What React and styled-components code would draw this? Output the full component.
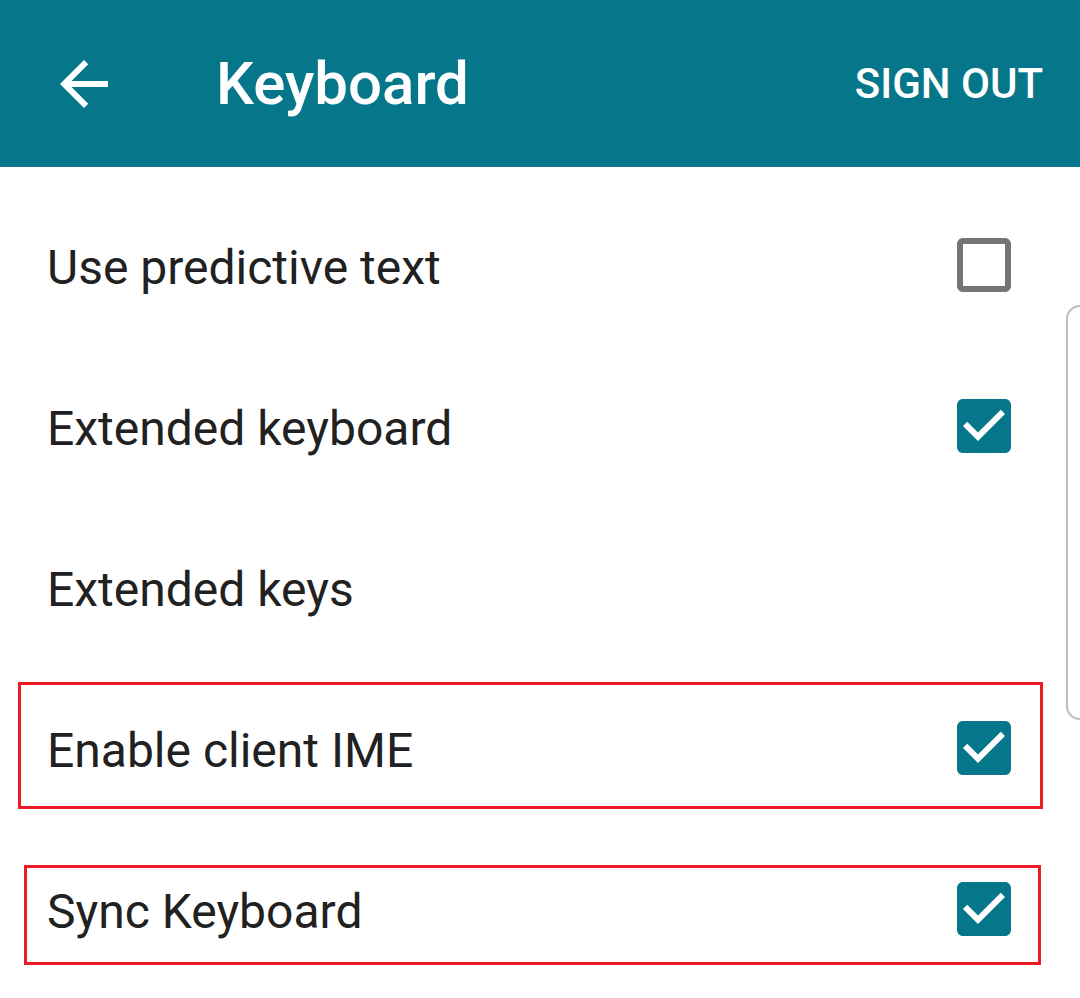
import React from 'react';
import styled, { createGlobalStyle } from 'styled-components';

const GlobalStyle = createGlobalStyle`
  html, body {
    margin: 0;
    padding: 0;
    background: #ffffff;
    font-family: Roboto, "Noto Sans", "Liberation Sans", sans-serif;
  }
`;

const Page = styled.div`
  position: relative;
  width: 1080px;
  height: 998px;
  overflow: hidden;
  background: #ffffff;
`;

const AppBar = styled.header`
  height: 167px;
  background: #06778a;
  display: flex;
  align-items: center;
  padding: 0 37px 0 48px;
  box-sizing: border-box;
  color: #ffffff;
`;

const BackButton = styled.div`
  width: 72px;
  height: 72px;
  display: flex;
  svg {
    width: 72px;
    height: 72px;
    fill: #ffffff;
  }
`;

const Title = styled.h1`
  margin: 0 0 0 96px;
  flex: 1;
  font-size: 60px;
  font-weight: 500;
  letter-spacing: 0;
`;

const SignOut = styled.span`
  font-size: 42px;
  font-weight: 500;
`;

const List = styled.div`
  padding-top: 17px;
  display: flex;
  flex-direction: column;
`;

const Row = styled.div`
  position: relative;
  height: 161px;
  display: flex;
  align-items: center;
  justify-content: space-between;
  padding: 0 60px 0 47px;
  box-sizing: border-box;
`;

const Label = styled.span`
  padding-top: 6px;
  font-size: 48px;
  color: #212121;
`;

const Box = styled.svg`
  width: 72px;
  height: 72px;
  fill: ${(p) => (p.$checked ? '#06778a' : '#757575')};
`;

const Highlight = styled.div`
  position: absolute;
  left: ${(p) => p.$left}px;
  top: ${(p) => p.$top}px;
  width: ${(p) => p.$width}px;
  height: ${(p) => p.$height}px;
  border: 3px solid #ed1c24;
  box-sizing: border-box;
  pointer-events: none;
`;

const ScrollHint = styled.div`
  position: absolute;
  left: 1066px;
  top: 305px;
  width: 40px;
  height: 415px;
  border: 2px solid #bdbdbd;
  border-radius: 14px;
  box-sizing: border-box;
`;

function CheckBox({ checked }) {
  return (
    <Box viewBox="0 0 24 24" $checked={checked}>
      {checked ? (
        <path d="M19 3H5c-1.11 0-2 .9-2 2v14c0 1.1.89 2 2 2h14c1.11 0 2-.9 2-2V5c0-1.1-.89-2-2-2zm-9 14l-5-5 1.41-1.41L10 14.17l7.59-7.59L19 8l-9 9z" />
      ) : (
        <path d="M19 5v14H5V5h14m0-2H5c-1.1 0-2 .9-2 2v14c0 1.1.9 2 2 2h14c1.1 0 2-.9 2-2V5c0-1.1-.9-2-2-2z" />
      )}
    </Box>
  );
}

const rows = [
  { label: 'Use predictive text', checked: false },
  { label: 'Extended keyboard', checked: true },
  { label: 'Extended keys' },
  { label: 'Enable client IME', checked: true, mark: { left: 18, top: 15, width: 1025, height: 127 } },
  { label: 'Sync Keyboard', checked: true, mark: { left: 24, top: 37, width: 1017, height: 100 } },
];

export default function App() {
  return (
    <Page>
      <GlobalStyle />
      <AppBar>
        <BackButton>
          <svg viewBox="0 0 24 24">
            <path d="M20 11H7.83l5.59-5.59L12 4l-8 8 8 8 1.41-1.41L7.83 13H20v-2z" />
          </svg>
        </BackButton>
        <Title>Keyboard</Title>
        <SignOut>SIGN OUT</SignOut>
      </AppBar>
      <List>
        {rows.map((r) => (
          <Row key={r.label}>
            <Label>{r.label}</Label>
            {r.checked !== undefined && <CheckBox checked={r.checked} />}
            {r.mark && (
              <Highlight
                $left={r.mark.left}
                $top={r.mark.top}
                $width={r.mark.width}
                $height={r.mark.height}
              />
            )}
          </Row>
        ))}
      </List>
      <ScrollHint />
    </Page>
  );
}
